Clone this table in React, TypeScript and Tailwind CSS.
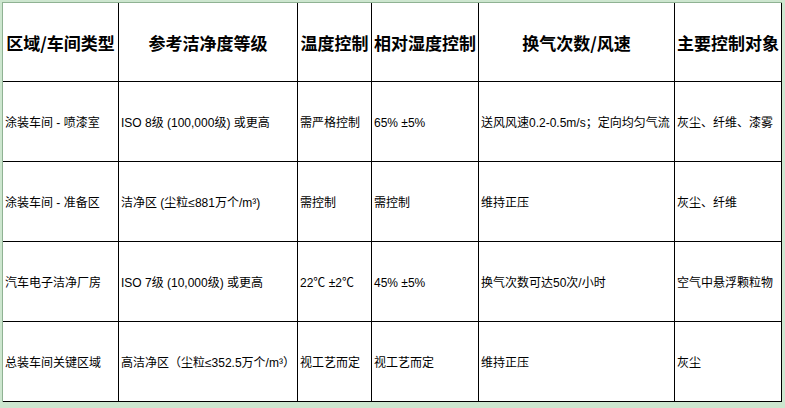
import React from "react";

const headers = ["区域/车间类型", "参考洁净度等级", "温度控制", "相对湿度控制", "换气次数/风速", "主要控制对象"];

const rows: string[][] = [
  ["涂装车间 - 喷漆室", "ISO 8级 (100,000级) 或更高", "需严格控制", "65% ±5%", "送风风速0.2-0.5m/s；定向均匀气流", "灰尘、纤维、漆雾"],
  ["涂装车间 - 准备区", "洁净区 (尘粒≤881万个/m³)", "需控制", "需控制", "维持正压", "灰尘、纤维"],
  ["汽车电子洁净厂房", "ISO 7级 (10,000级) 或更高", "22℃ ±2℃", "45% ±5%", "换气次数可达50次/小时", "空气中悬浮颗粒物"],
  ["总装车间关键区域", "高洁净区（尘粒≤352.5万个/m³）", "视工艺而定", "视工艺而定", "维持正压", "灰尘"],
];

export default function App() {
  return (
    <div className="w-[785px] h-[408px] bg-[#cde6cf] pt-[2px] pl-[2px] overflow-hidden">
      <div className="w-[780px] border-l border-t border-[#8fb293] bg-white">
        <div className="grid grid-cols-[116px_179px_74px_107px_196px_107px] grid-rows-[79px_80px_80px_80px_80px]">
          {headers.map((h) => (
            <div
              key={h}
              className="border-r border-b border-black flex items-center justify-center whitespace-nowrap text-[17px] font-bold text-black pt-[2px]"
              style={{ fontFamily: '"Noto Sans CJK SC", sans-serif' }}
            >
              {h}
            </div>
          ))}
          {rows.map((r, i) =>
            r.map((c, j) => (
              <div
                key={`${i}-${j}`}
                className="border-r border-b border-black flex items-center pl-[2px] pt-[3px] whitespace-nowrap overflow-hidden text-[12px] text-black"
                style={{ fontFamily: '"Liberation Sans", "Noto Sans CJK SC", sans-serif' }}
              >
                {c}
              </div>
            ))
          )}
        </div>
      </div>
    </div>
  );
}
